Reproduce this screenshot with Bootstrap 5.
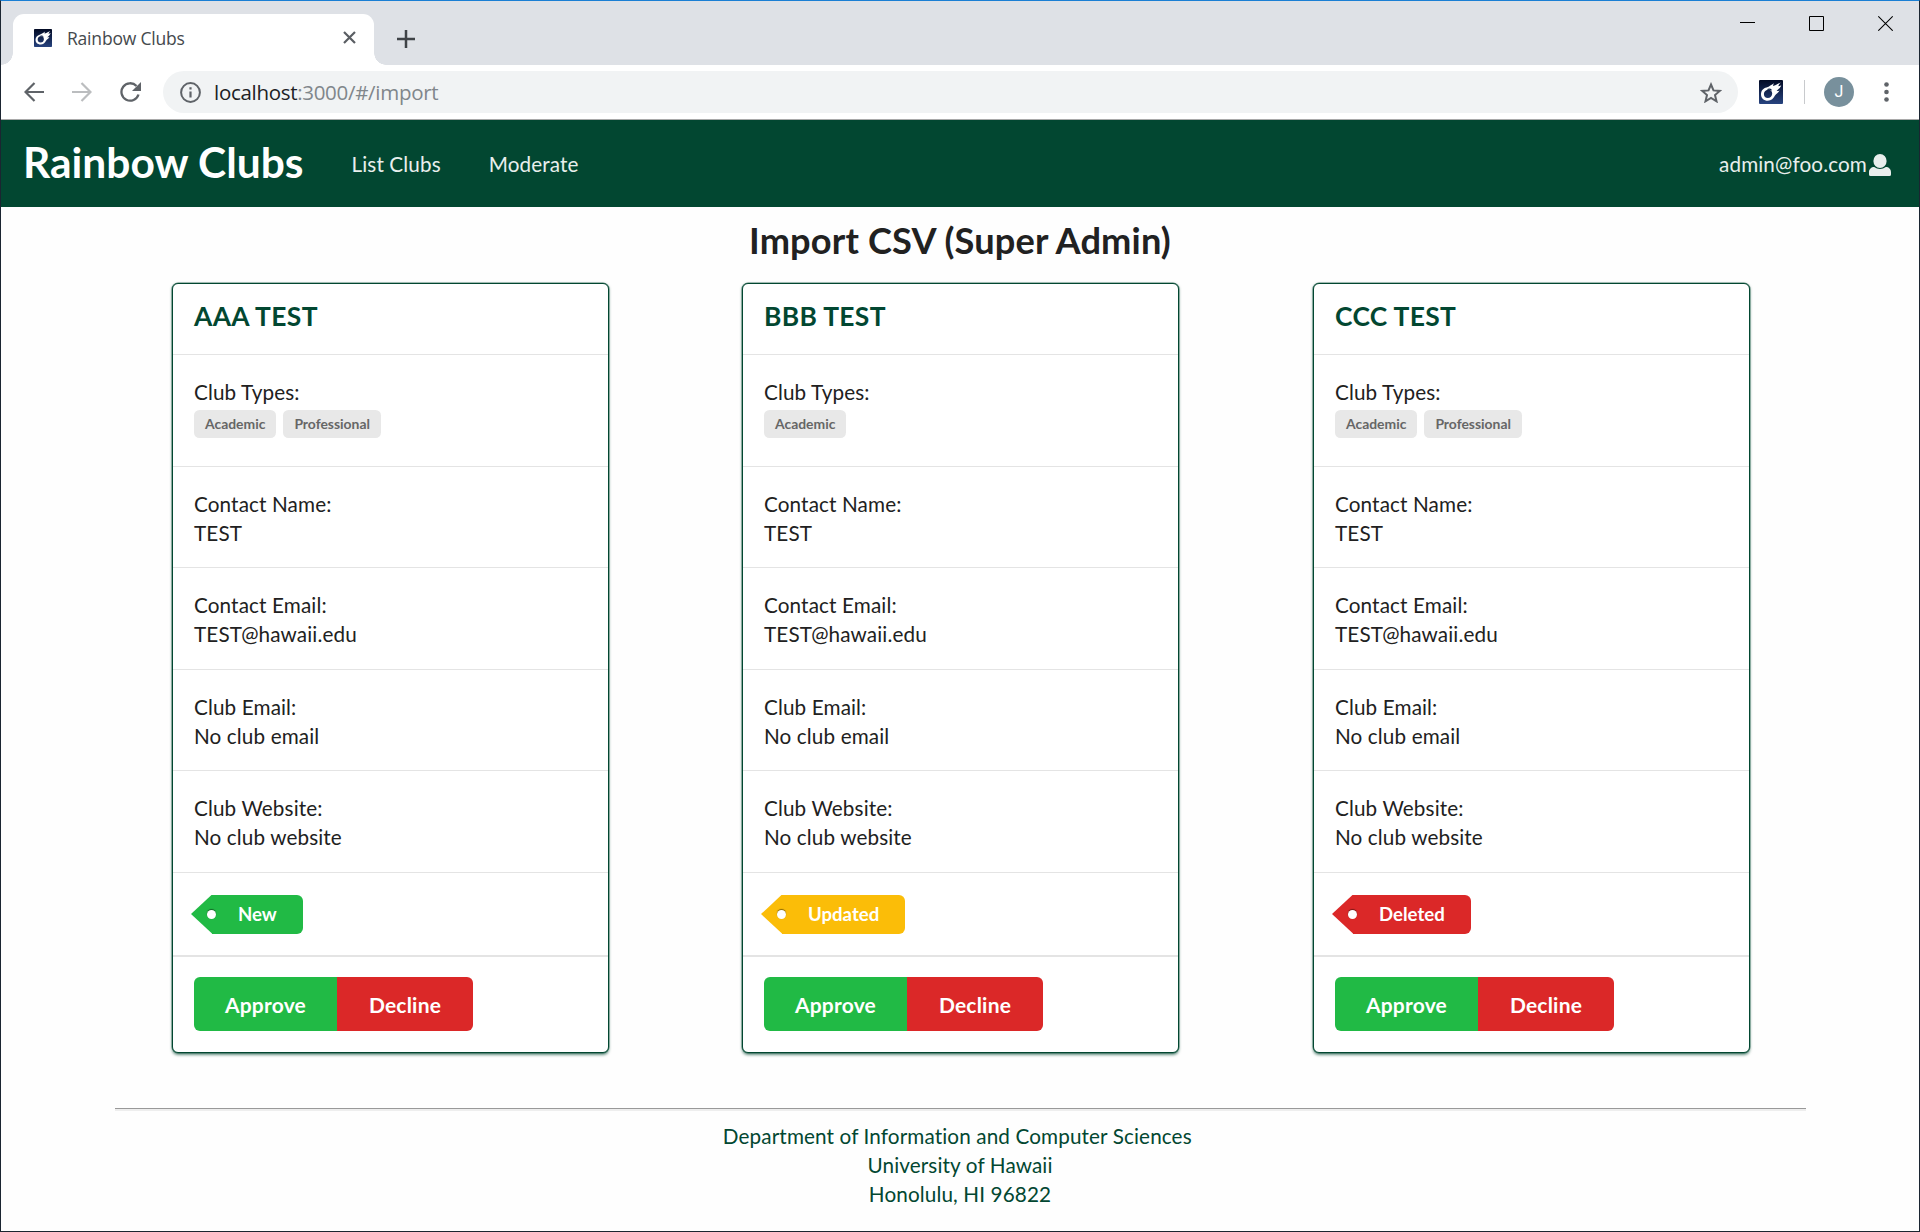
<!DOCTYPE html>
<html lang="en">
<head>
<meta charset="utf-8">
<title>Rainbow Clubs</title>
<link href="https://cdn.jsdelivr.net/npm/bootstrap@5.3.0/dist/css/bootstrap.min.css" rel="stylesheet">
<style>
  :root { --uh-green: #024731; --ok: #21ba45; --warn: #fbbd08; --bad: #db2828; }
  body { font-family: Lato, sans-serif; font-size: 20.7px; letter-spacing: .12px; line-height: 29px; color: #212121; background: #fff; }
  .window-frame { height: 1232px; overflow: hidden; border: 1px solid #1b2531; border-top-color: #1a7fd4; background: #fefefe; }
  .window-frame svg { display: block; flex: none; }
  .chrome-ui { font-family: "Open Sans", sans-serif; }
  .tab-strip { height: 64px; background: #dee1e6; padding: 13px 26px 0 12px; }
  .browser-tab { position: relative; width: 361px; height: 51px; background: #fff; border-radius: 11px 11px 0 0; padding: 0 18px 4px 21px; }
  .browser-tab::before, .browser-tab::after { content: ""; position: absolute; bottom: 0; width: 12px; height: 12px; }
  .browser-tab::before { left: -12px; background: radial-gradient(circle at 0 0, transparent 11.5px, #fff 12px); }
  .browser-tab::after { right: -12px; background: radial-gradient(circle at 100% 0, transparent 11.5px, #fff 12px); }
  .tab-title { font-size: 17.5px; letter-spacing: -.2px; color: #45494d; margin-left: 15px; line-height: 24px; }
  .new-tab { margin: 16px 0 0 23px; }
  .win-buttons { gap: 54px; }
  .toolbar { height: 54px; background: #fff; padding: 0 30px 0 23px; }
  .omnibox { height: 42px; border-radius: 21px; background: #f1f3f4; margin-left: 22px; padding: 0 16px 0 17px; font-size: 20.5px; letter-spacing: -.3px; color: #80868b; }
  .omnibox b { font-weight: 400; color: #202124; }
  .toolbar-rule { width: 1px; height: 24px; background: #c8cacd; margin: 0 19px 0 21px; }
  .avatar { width: 30px; height: 30px; border-radius: 50%; background: #78909c; color: #fff; font: 16px/30px Roboto, sans-serif; }
  .site-nav { height: 88px; background: var(--uh-green); border-top: 1px solid #a9a9a9; padding: 2px 28px 0 22px; color: #e9efed; }
  .site-nav .brand { font-size: 42.5px; letter-spacing: 0; font-weight: 700; line-height: 52px; color: #fff; margin: 0 48px 6px 0; }
  .site-nav a { color: inherit; text-decoration: none; }
  .page-title { font-size: 36.2px; letter-spacing: .15px; font-weight: 700; line-height: 46px; margin: 10px 0 20px; }
  .club-deck { padding: 0 169px 0 171px; gap: 133px; }
  .club { width: 437px; height: 770px; border: 1px solid var(--uh-green); border-radius: 6px; box-shadow: 0 0 0 .5px rgba(2,71,49,.6), 0 1.5px 3px 0 rgba(2,71,49,.6); background: #fff; --bs-card-color: #212121; }
  .club > div { padding: 23px 21px 0; height: 101.4px; border-bottom: 1px solid #e4e4e4; }
  .club > .head { height: 71px; padding-top: 15px; font-size: 26.4px; letter-spacing: .35px; font-weight: 700; line-height: 34px; color: var(--uh-green); }
  .club > .types { height: 112px; }
  .club > .state { height: 84px; border-bottom-width: 2px; padding-top: 22px; }
  .club > .actions { height: auto; border: 0; padding-top: 20px; }
  .pill-row { margin-top: 3px; gap: 7px; }
  .type-pill { background: #e8e8e8; color: #666; font-size: 13.9px; letter-spacing: 0; font-weight: 700; line-height: 14px; padding: 7px 11px; border-radius: 5.5px; height: 28px; }
  .tag-label { position: relative; width: fit-content; height: 39px; margin-left: 18px; padding: 0 26px 0 26px; border-radius: 0 6px 6px 0; color: #fff; font-weight: 700; font-size: 18.6px; letter-spacing: 0; line-height: 38px; background: var(--tone); }
  .tag-label::before { content: ""; position: absolute; left: -21px; top: 0; width: 23px; height: 39px; background: var(--tone); clip-path: polygon(21px 0, 100% 0, 100% 100%, 21px 100%, 0 50%); }
  .tag-label::after { content: ""; position: absolute; left: -5px; top: 15px; width: 9px; height: 9px; border-radius: 50%; background: #fff; box-shadow: 0 -1px 1px rgba(0,0,0,.45); }
  .btn-club { height: 54px; border: 0; border-radius: 6px; color: #fff; background: var(--tone); font-size: 21px; letter-spacing: .2px; font-weight: 700; line-height: 55px; padding: 0; }
  .approve { --tone: var(--ok); width: 143px; } .decline { --tone: var(--bad); width: 136px; }
  .foot-rule { height: 3px; background: linear-gradient(#999 1px, #eee 1px); margin: 55px 113px 11px 114px; }
  .site-foot { color: var(--uh-green); }
</style>
<script src="https://cdn.jsdelivr.net/npm/bootstrap@5.3.0/dist/js/bootstrap.bundle.min.js"></script>
</head>
<body>
<svg width="0" height="0" class="position-absolute">
  <defs>
    <linearGradient id="navy" x1="0" y1="0" x2="0" y2="1"><stop offset="0" stop-color="#020a24"/><stop offset="1" stop-color="#27437f"/></linearGradient>
    <symbol id="meteor" viewBox="0 0 24 24">
      <rect width="24" height="24" rx="1" fill="url(#navy)"/>
      <path fill="#fff" fill-rule="evenodd" d="M2 14.400C2 10.300 4.500 8.300 7.500 7.500C10.500 6.700 12.300 4.800 15 3.300C14.300 4.300 14 5.200 14 6C16.500 5.800 18.500 3.800 21.800 2.500C20.300 4 19.500 5.100 19.300 6.200C20.300 6.200 21.300 5.700 22.300 5.200C21.500 7.800 19.300 9.200 17.600 11C18.700 11.100 19.600 10.900 20.600 10.500C19.300 12.800 17.300 13.800 16 15.500C14.500 18.600 12.300 20.700 8.800 20.700C4.800 20.700 2 18 2 14.400ZM8.900 9.700C6.500 9.900 4.900 11.800 4.900 14C4.900 16.400 6.500 18 8.800 18C11.300 18 13.200 16 13.200 13.500C13.200 11.300 11.500 9.500 8.900 9.700Z"/>
      <path d="M8.500 9.500Q11 8.600 12.500 10.400" fill="none" stroke="#0f2148" stroke-width="1.300"/>
    </symbol>
  </defs>
</svg>
<div class="window-frame d-flex flex-column">
  <div class="chrome-ui">
    <div class="tab-strip d-flex align-items-start">
      <div class="browser-tab d-flex align-items-center">
        <svg width="18" height="18"><use href="#meteor"/></svg>
        <span class="tab-title">Rainbow Clubs</span>
        <svg class="ms-auto" width="13" height="13" viewBox="0 0 13 13" stroke="#5a5e63" stroke-width="2.2"><path d="M1 1l11 11M12 1L1 12"/></svg>
      </div>
      <svg class="new-tab" width="18" height="18" viewBox="0 0 18 18" stroke="#3f4347" stroke-width="2.500"><path d="M9 0v18M0 9h18"/></svg>
      <div class="win-buttons d-flex ms-auto">
        <svg width="15" height="17" viewBox="0 0 15 17"><path d="M0 8.500h15" stroke="#000"/></svg>
        <svg width="15" height="17" viewBox="0 0 15 17"><path d="M.5 2.500h14v14H.5z" fill="none" stroke="#000"/></svg>
        <svg width="15" height="17" viewBox="0 0 15 17"><path d="M.3 2.300l14.400 14.400M14.700 2.300L.3 16.700" stroke="#000" stroke-width="1.100"/></svg>
      </div>
    </div>
    <div class="toolbar d-flex align-items-center">
      <svg width="20" height="20" viewBox="0 0 20 20" fill="none" stroke="#5f6368" stroke-width="2.200"><path d="M20 10H2M10.500 1L1.500 10l9 9"/></svg>
      <svg width="20" height="20" viewBox="0 0 20 20" fill="none" stroke="#bbbdbf" stroke-width="2.200" style="margin-left:28px"><path d="M0 10h18M9.500 1l9 9-9 9"/></svg>
      <svg width="21" height="20" viewBox="0 0 21 20" fill="none" stroke="#5f6368" stroke-width="2.300" style="margin-left:28px"><path d="M18.500 12.500A8.700 8.700 0 1 1 16.500 4"/><path d="M21 0v9h-9z" fill="#5f6368" stroke="none"/></svg>
      <div class="omnibox d-flex align-items-center flex-grow-1">
        <svg width="21" height="21" viewBox="0 0 21 21" fill="none" stroke="#5f6368" stroke-width="2"><circle cx="10.500" cy="10.500" r="9.400"/><path d="M10.500 9.500v6M10.500 5.300v2.300" stroke-width="2.200"/></svg>
        <span style="margin-left:13px"><b>localhost</b>:3000/#/import</span>
        <svg class="ms-auto" width="22" height="21" viewBox="0 0 22 21" fill="none" stroke="#5f6368" stroke-width="2"><path d="M11 2.500l2.500 5.900 6.300.5-4.800 4.200 1.500 6.200L11 16l-5.500 3.300L7 13.100 2.200 8.900l6.300-.5z"/></svg>
      </div>
      <svg width="24" height="24" style="margin-left:21px"><use href="#meteor"/></svg>
      <div class="toolbar-rule"></div>
      <div class="avatar text-center">J</div>
      <svg width="5" height="20" viewBox="0 0 5 20" fill="#5f6368" style="margin-left:30px"><circle cx="2.500" cy="2.500" r="2.300"/><circle cx="2.500" cy="10" r="2.300"/><circle cx="2.500" cy="17.500" r="2.300"/></svg>
    </div>
  </div>

  <nav class="site-nav d-flex align-items-center">
    <a class="brand" href="#">Rainbow Clubs</a>
    <a href="#">List Clubs</a>
    <a href="#" style="margin-left:48px">Moderate</a>
    <a class="d-flex align-items-center ms-auto" href="#">admin@foo.com
      <svg width="22" height="22" viewBox="0 0 22 22" fill="#e9efed" style="margin-left:2px"><ellipse cx="11" cy="7" rx="6.600" ry="7"/><path d="M0 20.500v-2.300C0 15 2.300 13 5.200 13c3.500 2.600 8.100 2.600 11.600 0 2.900 0 5.200 2 5.200 5.200v2.300q0 1.500-1.500 1.500h-19Q0 22 0 20.500z"/></svg>
    </a>
  </nav>

  <h1 class="page-title text-center">Import CSV (Super Admin)</h1>

  <main class="club-deck d-flex">
    <article class="card club">
      <div class="head">AAA TEST</div>
      <div class="types">Club Types:<div class="pill-row d-flex"><span class="type-pill">Academic</span><span class="type-pill">Professional</span></div></div>
      <div>Contact Name:<br>TEST</div>
      <div>Contact Email:<br>TEST@hawaii.edu</div>
      <div>Club Email:<br>No club email</div>
      <div>Club Website:<br>No club website</div>
      <div class="state"><div class="tag-label" style="--tone:var(--ok)">New</div></div>
      <div class="actions d-flex"><button class="btn btn-club approve rounded-end-0">Approve</button><button class="btn btn-club decline rounded-start-0">Decline</button></div>
    </article>
    <article class="card club">
      <div class="head">BBB TEST</div>
      <div class="types">Club Types:<div class="pill-row d-flex"><span class="type-pill">Academic</span></div></div>
      <div>Contact Name:<br>TEST</div>
      <div>Contact Email:<br>TEST@hawaii.edu</div>
      <div>Club Email:<br>No club email</div>
      <div>Club Website:<br>No club website</div>
      <div class="state"><div class="tag-label" style="--tone:var(--warn)">Updated</div></div>
      <div class="actions d-flex"><button class="btn btn-club approve rounded-end-0">Approve</button><button class="btn btn-club decline rounded-start-0">Decline</button></div>
    </article>
    <article class="card club ms-auto">
      <div class="head">CCC TEST</div>
      <div class="types">Club Types:<div class="pill-row d-flex"><span class="type-pill">Academic</span><span class="type-pill">Professional</span></div></div>
      <div>Contact Name:<br>TEST</div>
      <div>Contact Email:<br>TEST@hawaii.edu</div>
      <div>Club Email:<br>No club email</div>
      <div>Club Website:<br>No club website</div>
      <div class="state"><div class="tag-label" style="--tone:var(--bad)">Deleted</div></div>
      <div class="actions d-flex"><button class="btn btn-club approve rounded-end-0">Approve</button><button class="btn btn-club decline rounded-start-0">Decline</button></div>
    </article>
  </main>

  <div class="foot-rule"></div>
  <footer class="site-foot text-center">Department of Information and Computer Sciences&nbsp;<br>University of Hawaii<br>Honolulu, HI 96822</footer>
</div>
</body>
</html>
